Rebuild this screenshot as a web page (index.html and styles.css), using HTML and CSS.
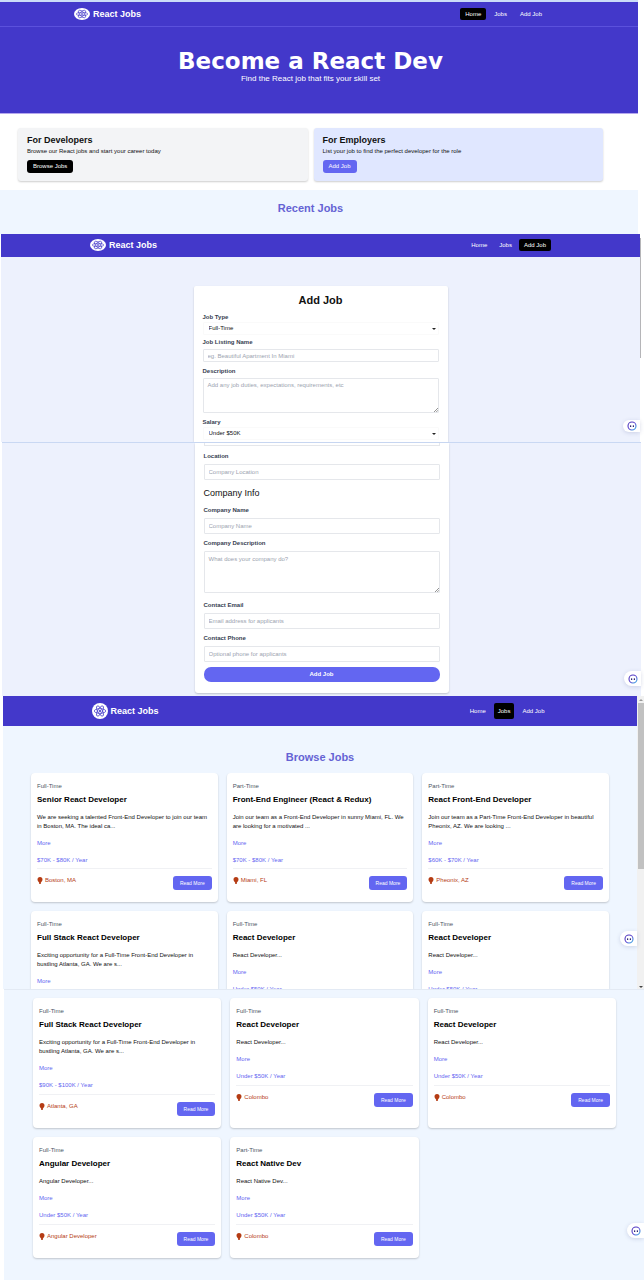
FILE: index.html
```html
<!DOCTYPE html>
<html lang="en">
<head>
<meta charset="utf-8">
<meta name="viewport" content="width=device-width, initial-scale=1">
<title>React Jobs</title>
<link rel="stylesheet" href="styles.css">
</head>
<body>
<svg class="defs" aria-hidden="true">
  <defs>
    <linearGradient id="bot-ring" x1="0" y1="0" x2="1" y2="1">
      <stop offset="0" stop-color="#4a35b8"/><stop offset=".5" stop-color="#5b3fd0"/><stop offset="1" stop-color="#35b8e8"/>
    </linearGradient>
    <symbol id="logo" viewBox="0 0 32 32" preserveAspectRatio="none">
      <circle cx="16" cy="16" r="16" fill="#fff"/>
      <g fill="none" stroke="#4338ca" stroke-width="1.5">
        <ellipse cx="16" cy="16" rx="11.5" ry="4.6"/>
        <ellipse cx="16" cy="16" rx="11.5" ry="4.6" transform="rotate(60 16 16)"/>
        <ellipse cx="16" cy="16" rx="11.5" ry="4.6" transform="rotate(120 16 16)"/>
      </g>
      <circle cx="16" cy="16" r="2.2" fill="#4338ca"/>
    </symbol>
    <symbol id="pin" viewBox="0 0 10 14">
      <path d="M5 0a5 5 0 0 1 5 5c0 2.6-2.200 4.600-3.200 6L6.500 14h-3L3.200 11C2.200 9.600 0 7.600 0 5a5 5 0 0 1 5-5z" fill="#b53c14"/>
    </symbol>
    <symbol id="bot" viewBox="0 0 20 20">
      <circle cx="10" cy="10" r="8" fill="#fff" stroke="url(#bot-ring)" stroke-width="2.200"/>
      <rect x="6" y="8.500" width="2.500" height="3.500" rx="1" fill="#2b2270"/>
      <rect x="11.500" y="8.500" width="2.500" height="3.500" rx="1" fill="#2b2270"/>
    </symbol>
    <symbol id="grip" viewBox="0 0 4 4">
      <path d="M0 4 4 0M2.200 4 4 2.200" stroke="#666" stroke-width=".7" fill="none"/>
    </symbol>
  </defs>
</svg>

<section class="screen home">
  <header class="navbar navbar-home">
    <div class="navbar-inner">
      <a class="brand" href="#"><svg class="logo"><use href="#logo"/></svg>React Jobs</a>
      <nav class="links"><a class="active" href="#">Home</a><a href="#">Jobs</a><a href="#">Add Job</a></nav>
    </div>
  </header>
  <div class="hero">
    <h1>Become a React Dev</h1>
    <p>Find the React job that fits your skill set</p>
  </div>
  <div class="promos">
    <div class="promo">
      <h2>For Developers</h2>
      <p>Browse our React jobs and start your career today</p>
      <a class="btn dark" href="#">Browse Jobs</a>
    </div>
    <div class="promo tinted">
      <h2>For Employers</h2>
      <p>List your job to find the perfect developer for the role</p>
      <a class="btn" href="#">Add Job</a>
    </div>
  </div>
  <div class="recent"><h2 class="section-title">Recent Jobs</h2></div>
</section>

<section class="screen add-top">
  <div class="slim-track"><div class="slim-thumb"></div></div>
  <header class="navbar navbar-add">
    <div class="navbar-inner">
      <a class="brand" href="#"><svg class="logo"><use href="#logo"/></svg>React Jobs</a>
      <nav class="links"><a href="#">Home</a><a href="#">Jobs</a><a class="active" href="#">Add Job</a></nav>
    </div>
  </header>
  <form class="sheet sheet-top">
    <h2>Add Job</h2>
    <label for="type">Job Type</label>
    <div class="picker"><select id="type"><option>Full-Time</option><option>Part-Time</option></select></div>
    <label for="listing">Job Listing Name</label>
    <input id="listing" type="text" placeholder="eg. Beautiful Apartment In Miami">
    <label class="spaced" for="description">Description</label>
    <div class="area"><textarea id="description" placeholder="Add any job duties, expectations, requirements, etc"></textarea><svg class="grip"><use href="#grip"/></svg></div>
    <label class="spaced" for="salary">Salary</label>
    <div class="picker"><select id="salary"><option>Under $50K</option><option>$50K - $60K</option></select></div>
  </form>
  <button class="bot" type="button" aria-label="Assistant"><svg><use href="#bot"/></svg></button>
</section>

<section class="screen add-bottom">
  <form class="sheet sheet-bottom">
    <div class="field-end"></div>
    <label for="location">Location</label>
    <input id="location" type="text" placeholder="Company Location">
    <h3>Company Info</h3>
    <label for="company">Company Name</label>
    <input id="company" type="text" placeholder="Company Name">
    <label for="about">Company Description</label>
    <div class="area"><textarea id="about" placeholder="What does your company do?"></textarea><svg class="grip"><use href="#grip"/></svg></div>
    <label class="after-area" for="email">Contact Email</label>
    <input id="email" type="email" placeholder="Email address for applicants">
    <label for="phone">Contact Phone</label>
    <input id="phone" type="tel" placeholder="Optional phone for applicants">
    <button class="submit" type="submit">Add Job</button>
  </form>
  <button class="bot" type="button" aria-label="Assistant"><svg><use href="#bot"/></svg></button>
</section>

<section class="screen browse">
  <div class="page">
    <header class="navbar navbar-browse">
      <div class="navbar-inner">
        <a class="brand" href="#"><svg class="logo"><use href="#logo"/></svg>React Jobs</a>
        <nav class="links"><a href="#">Home</a><a class="active" href="#">Jobs</a><a href="#">Add Job</a></nav>
      </div>
    </header>
    <h2 class="section-title">Browse Jobs</h2>
    <div class="jobs jobs-cut">
      <article class="job">
        <p class="type">Full-Time</p><h3>Senior React Developer</h3>
        <p class="text">We are seeking a talented Front-End Developer to join our team in Boston, MA. The ideal ca...</p>
        <button class="more" type="button">More</button><p class="salary">$70K - $80K / Year</p>
        <div class="foot"><span class="place"><svg><use href="#pin"/></svg>Boston, MA</span><a class="btn read" href="#">Read More</a></div>
      </article>
      <article class="job">
        <p class="type">Part-Time</p><h3>Front-End Engineer (React &amp; Redux)</h3>
        <p class="text">Join our team as a Front-End Developer in sunny Miami, FL. We are looking for a motivated ...</p>
        <button class="more" type="button">More</button><p class="salary">$70K - $80K / Year</p>
        <div class="foot"><span class="place"><svg><use href="#pin"/></svg>Miami, FL</span><a class="btn read" href="#">Read More</a></div>
      </article>
      <article class="job">
        <p class="type">Part-Time</p><h3>React Front-End Developer</h3>
        <p class="text">Join our team as a Part-Time Front-End Developer in beautiful Pheonix, AZ. We are looking ...</p>
        <button class="more" type="button">More</button><p class="salary">$60K - $70K / Year</p>
        <div class="foot"><span class="place"><svg><use href="#pin"/></svg>Pheonix, AZ</span><a class="btn read" href="#">Read More</a></div>
      </article>
      <article class="job">
        <p class="type">Full-Time</p><h3>Full Stack React Developer</h3>
        <p class="text">Exciting opportunity for a Full-Time Front-End Developer in bustling Atlanta, GA. We are s...</p>
        <button class="more" type="button">More</button>
      </article>
      <article class="job">
        <p class="type">Full-Time</p><h3>React Developer</h3>
        <p class="text">React Developer...</p>
        <button class="more" type="button">More</button><p class="salary">Under $50K / Year</p>
      </article>
      <article class="job">
        <p class="type">Full-Time</p><h3>React Developer</h3>
        <p class="text">React Developer...</p>
        <button class="more" type="button">More</button><p class="salary">Under $50K / Year</p>
      </article>
    </div>
    <button class="bot" type="button" aria-label="Assistant"><svg><use href="#bot"/></svg></button>
  </div>
  <div class="scrollbar"><i class="arrow up"></i><div class="thumb"></div><i class="arrow down"></i></div>
</section>

<section class="screen rest">
  <div class="jobs">
    <article class="job">
      <p class="type">Full-Time</p><h3>Full Stack React Developer</h3>
      <p class="text">Exciting opportunity for a Full-Time Front-End Developer in bustling Atlanta, GA. We are s...</p>
      <button class="more" type="button">More</button><p class="salary">$90K - $100K / Year</p>
      <div class="foot"><span class="place"><svg><use href="#pin"/></svg>Atlanta, GA</span><a class="btn read" href="#">Read More</a></div>
    </article>
    <article class="job">
      <p class="type">Full-Time</p><h3>React Developer</h3>
      <p class="text">React Developer...</p>
      <button class="more" type="button">More</button><p class="salary">Under $50K / Year</p>
      <div class="foot"><span class="place"><svg><use href="#pin"/></svg>Colombo</span><a class="btn read" href="#">Read More</a></div>
    </article>
    <article class="job">
      <p class="type">Full-Time</p><h3>React Developer</h3>
      <p class="text">React Developer...</p>
      <button class="more" type="button">More</button><p class="salary">Under $50K / Year</p>
      <div class="foot"><span class="place"><svg><use href="#pin"/></svg>Colombo</span><a class="btn read" href="#">Read More</a></div>
    </article>
    <article class="job">
      <p class="type">Full-Time</p><h3>Angular Developer</h3>
      <p class="text">Angular Developer...</p>
      <button class="more" type="button">More</button><p class="salary">Under $50K / Year</p>
      <div class="foot"><span class="place"><svg><use href="#pin"/></svg>Angular Developer</span><a class="btn read" href="#">Read More</a></div>
    </article>
    <article class="job">
      <p class="type">Part-Time</p><h3>React Native Dev</h3>
      <p class="text">React Native Dev...</p>
      <button class="more" type="button">More</button><p class="salary">Under $50K / Year</p>
      <div class="foot"><span class="place"><svg><use href="#pin"/></svg>Colombo</span><a class="btn read" href="#">Read More</a></div>
    </article>
  </div>
  <button class="bot" type="button" aria-label="Assistant"><svg><use href="#bot"/></svg></button>
</section>
</body>
</html>
```
FILE: styles.css
```css
* { box-sizing: border-box; }
body, h1, h2, h3, p { margin: 0; }
body { background: #fff; color: #111; font-family: "Liberation Sans", Arial, sans-serif; font-size: 6px; line-height: 9px; }
a { color: inherit; text-decoration: none; }
button, input, select, textarea { font: inherit; color: inherit; margin: 0; }
button { border: 0; padding: 0; background: none; }
.defs { position: absolute; width: 0; height: 0; }
.screen { position: relative; }

/* Navigation */
.navbar { background: #4338ca; color: #fff; padding: 6px 0; }
.navbar-inner { display: flex; justify-content: space-between; align-items: center; margin: 0 auto; }
.brand { display: flex; align-items: center; gap: 3px; font-size: 9px; font-weight: bold; }
.logo { width: 16px; height: 12px; }
.links { display: flex; gap: 3px; }
.links a { padding: 0 5px; border-radius: 2px; line-height: 12px; }
.links .active { background: #000; }
.navbar-home { border-bottom: 1px solid #5b51dc; padding: 6px 17px 6px 0; }
.navbar-home .navbar-inner { max-width: 473px; }
.navbar-add { padding: 5px 0 6px; }
.navbar-add .navbar-inner { max-width: 461px; }
.navbar-add .links { gap: 2px; }
.navbar-browse { padding: 7px 0; }
.navbar-browse .navbar-inner { max-width: 457px; }
.navbar-browse .logo { height: 16px; }
.navbar-browse .links { gap: 4px; }
.navbar-browse .links a { padding: 0 4px; line-height: 16px; }

/* Home */
.home { margin-right: 6px; border-top: 2px solid #cbdcf8; }
.hero { background: #4338ca; color: #fff; text-align: center; padding: 22px 17px 28px 0; border-bottom: 1px solid #b5a8ee; }
.hero h1 { font-family: "DejaVu Sans", sans-serif; font-size: 23px; line-height: 24px; font-weight: bold; }
.hero p { font-size: 8px; line-height: 12px; }
.promos { display: grid; grid-template-columns: 1fr 1fr; gap: 6px; padding: 14px 35px 9px 18px; }
.promo { background: #f3f4f6; border-radius: 3px; padding: 7px 9px 8px; box-shadow: 0 1px 2px rgba(0, 0, 0, .2); }
.promo.tinted { background: #e0e7ff; }
.promo h2 { font-size: 9px; line-height: 11px; }
.promo p { line-height: 11px; margin-bottom: 3px; }
.btn { display: inline-block; vertical-align: top; background: #6366f1; color: #fff; border-radius: 3px; padding: 0 6px; line-height: 13px; }
.btn.dark { background: #000; }
.recent { background: #eff6ff; padding: 11px 17px 19px 0; }
.section-title { color: #6563d4; text-align: center; font-size: 11px; line-height: 14px; }

/* Add job form */
.add-top { margin: 0 4px 0 1px; background: #edf1fd; }
.add-bottom { margin: 0 3px 0 2px; background: #edf1fd; border-top: 1px solid #c9d8f3; padding-bottom: 3px; }
.sheet { margin: 0 auto; background: #fff; max-width: 254px; padding: 0 9px; box-shadow: 0 1px 2px rgba(0, 0, 0, .2); display: flex; flex-direction: column; }
.add-top .sheet { margin-top: 29px; padding-top: 7px; border-radius: 2px 2px 0 0; }
.sheet h2 { font-size: 11px; line-height: 14px; text-align: center; margin-bottom: 6px; }
.sheet h3 { font-size: 9px; line-height: 12px; font-weight: normal; margin: 2px 0 7px; }
.sheet label { color: #374151; font-weight: bold; line-height: 9px; }
.sheet input, .sheet textarea, .sheet select { display: block; width: 100%; border: 1px solid #e5e7eb; border-radius: 1px; background: #fff; padding: 0 4px; outline: 0; }
.sheet ::placeholder { color: #9ca3af; opacity: 1; }
.sheet input { height: 13px; margin-top: 2px; }
.sheet textarea { height: 35px; resize: none; padding: 2px 4px; line-height: 8px; }
.sheet select { appearance: none; height: 13px; border-color: #fafafa; padding-left: 5px; }
.picker { position: relative; margin-bottom: 3px; }
.picker::after { content: ""; position: absolute; right: 3px; top: 6px; border: 2px solid transparent; border-top-color: #222; border-bottom: 0; }
.area { position: relative; margin-top: 2px; }
.grip { position: absolute; right: 1px; bottom: 1px; width: 4px; height: 4px; }
.sheet .spaced { margin-top: 5px; }
.sheet-top .picker:last-child { margin-bottom: 2px; }
.sheet-bottom { padding-bottom: 11px; border-radius: 0 0 3px 3px; }
.sheet-bottom .field-end { border: 1px solid #e5e7eb; border-top: 0; height: 3px; margin-bottom: 6px; }
.sheet-bottom label + input, .sheet-bottom label + .area { margin-top: 3px; margin-bottom: 5px; }
.sheet-bottom input { height: 16px; }
.sheet-bottom textarea { height: 42px; padding: 3px 4px; }
.sheet-bottom .after-area { margin-top: 3px; }
.submit { background: #6366f1; color: #fff; font-weight: bold; border-radius: 7px; line-height: 15px; }

/* Job lists */
.browse { display: flex; margin-left: 3px; }
.page { position: relative; flex: 1; background: #eff6ff; }
.page .section-title { margin: 24px 0 9px; }
.jobs { display: grid; grid-template-columns: repeat(3, 1fr); gap: 9px; padding: 0 28px; }
.jobs-cut { grid-template-rows: auto 78px; overflow: hidden; }
.jobs-cut .job:nth-child(n+4) { overflow: hidden; border-radius: 4px 4px 0 0; }
.job { background: #fff; border-radius: 4px; padding: 9px 6px 12px; box-shadow: 0 1px 2px rgba(0, 0, 0, .2); }
.type { color: #4b5563; }
.job h3 { font-size: 8px; line-height: 11px; margin: 3px 0 8px; color: #000; }
.more { display: block; margin: 8px 0; color: #6366f1; }
.salary { color: #6366f1; }
.foot { display: flex; justify-content: space-between; align-items: flex-start; border-top: 1px solid #f0f1f4; margin-top: 3px; padding-top: 7px; }
.place { display: flex; align-items: center; gap: 2px; color: #b53c14; }
.place svg { width: 6px; height: 7px; }
.read { font-size: 5px; line-height: 14px; padding: 0 7px; }
.rest { margin-left: 4px; background: #eff6ff; border-top: 1px solid #e3eaf4; padding: 8px 0 23px 1px; }
.rest .salary { padding-bottom: 1px; }

/* Scrollbars and assistant button */
.scrollbar { width: 7px; background: #f1f1f1; display: flex; flex-direction: column; align-items: center; padding: 3px 0 1px; gap: 2px; }
.thumb { width: 6px; height: 166px; background: #c1c1c1; }
.arrow { border: 2px solid transparent; }
.arrow.up { border-top: 0; border-bottom-color: #999; }
.arrow.down { border-bottom: 0; border-top-color: #444; margin-top: auto; }
.slim-track { position: absolute; right: -1px; top: 4px; bottom: 0; width: 1px; }
.slim-thumb { height: 120px; background: #b5b5b8; }
.bot { position: absolute; right: 0; bottom: 10px; width: 17px; height: 15px; border-radius: 8px 0 0 8px; background: #fff; box-shadow: 0 1px 4px rgba(70, 80, 140, .2); display: flex; align-items: center; justify-content: center; }
.bot svg { width: 10px; height: 10px; }
.add-top .bot { height: 12px; }
.browse .bot, .rest .bot { bottom: 43px; }
```
